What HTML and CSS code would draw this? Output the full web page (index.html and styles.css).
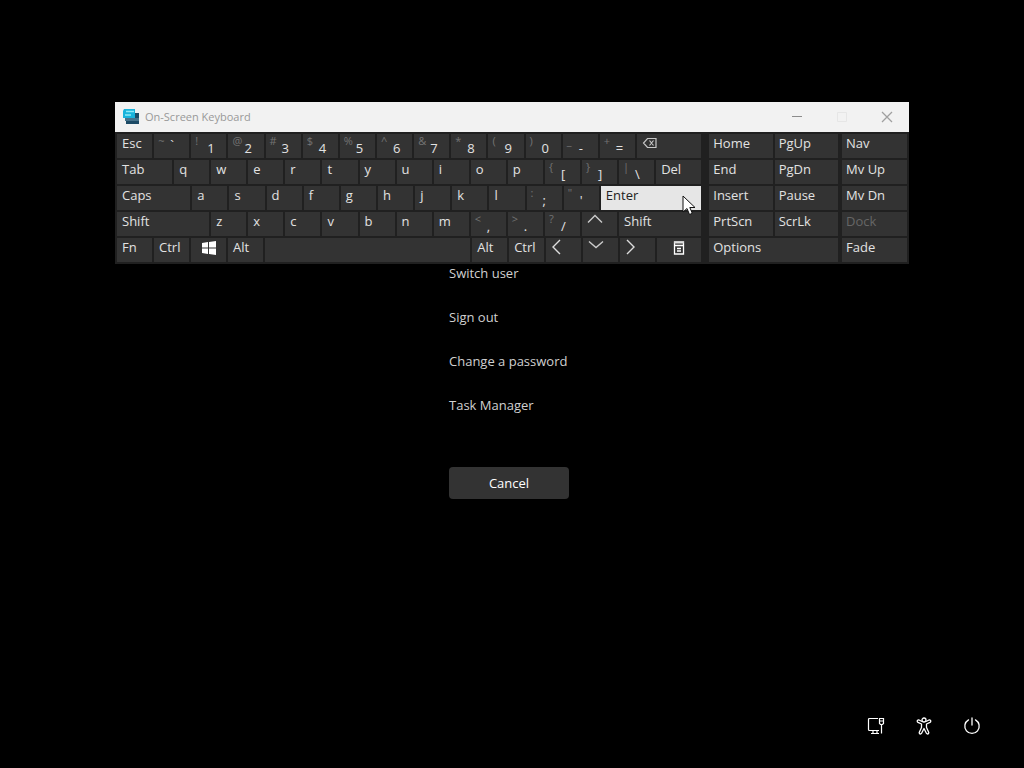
FILE: index.html
```html
<!DOCTYPE html>
<html lang="en">
<head>
<meta charset="utf-8">
<title>Security options</title>
<link rel="stylesheet" href="styles.css">
</head>
<body>
<section class="osk" aria-label="On-Screen Keyboard">
  <header class="titlebar">
    <svg class="app-icon" width="16" height="16" viewBox="0 0 16 16"><path d="M3 4h13v11H3z" fill="#1d4b66"/><path d="M2 9h14v3H2z" fill="#47738c"/><path d="M1 0h11v9H0V2z" fill="#19b3dc"/><path d="M3 2.500h8M2 6h6" stroke="#8deaf8" stroke-width="1.500"/></svg>
    <h1 class="title">On-Screen Keyboard</h1>
    <button class="win-btn" aria-label="Minimize"><svg width="12" height="12" viewBox="0 0 12 12"><path d="M1 5.500h10" stroke="#8c8c8c"/></svg></button>
    <button class="win-btn" aria-label="Maximize" disabled><svg width="12" height="12" viewBox="0 0 12 12"><path d="M1.500 1.500h9v9h-9z" fill="none" stroke="#e6e6e6"/></svg></button>
    <button class="win-btn" aria-label="Close"><svg width="12" height="12" viewBox="0 0 12 12"><path d="M1 1l10 10M11 1L1 11" stroke="#a0a0a0" stroke-width="1.300"/></svg></button>
  </header>
  <div class="board">
    <div class="keys">
      <div class="row">
        <button class="key">Esc</button>
        <button class="key dual"><span class="alt">~</span><span class="high">`</span></button>
        <button class="key dual"><span class="alt">!</span><span>1</span></button>
        <button class="key dual"><span class="alt">@</span><span>2</span></button>
        <button class="key dual"><span class="alt">#</span><span>3</span></button>
        <button class="key dual"><span class="alt">$</span><span>4</span></button>
        <button class="key dual"><span class="alt">%</span><span>5</span></button>
        <button class="key dual"><span class="alt">^</span><span>6</span></button>
        <button class="key dual"><span class="alt">&amp;</span><span>7</span></button>
        <button class="key dual"><span class="alt">*</span><span>8</span></button>
        <button class="key dual"><span class="alt">(</span><span>9</span></button>
        <button class="key dual"><span class="alt">)</span><span>0</span></button>
        <button class="key dual"><span class="alt">_</span><span>-</span></button>
        <button class="key dual"><span class="alt">+</span><span>=</span></button>
        <button class="key w-back" aria-label="Backspace"><svg width="16" height="18" viewBox="0 0 16 18"><path d="M5.500 4.500H14v9H5.500L1.500 9zM7.500 6.500l4 5M11.500 6.500l-4 5" fill="none" stroke="#c8c8c8" stroke-width="1.200"/></svg></button>
      </div>
      <div class="row">
        <button class="key w-tab">Tab</button>
        <button class="key">q</button><button class="key">w</button><button class="key">e</button><button class="key">r</button><button class="key">t</button><button class="key">y</button><button class="key">u</button><button class="key">i</button><button class="key">o</button><button class="key">p</button>
        <button class="key dual"><span class="alt">{</span><span>[</span></button>
        <button class="key dual"><span class="alt">}</span><span>]</span></button>
        <button class="key dual"><span class="alt">|</span><span>\</span></button>
        <button class="key w-del">Del</button>
      </div>
      <div class="row">
        <button class="key w-caps">Caps</button>
        <button class="key">a</button><button class="key">s</button><button class="key">d</button><button class="key">f</button><button class="key">g</button><button class="key">h</button><button class="key">j</button><button class="key">k</button><button class="key">l</button>
        <button class="key dual"><span class="alt">:</span><span>;</span></button>
        <button class="key dual"><span class="alt">"</span><span>'</span></button>
        <button class="key w-enter pressed">Enter
          <svg class="cursor" width="14" height="21" viewBox="0 0 14 21"><path d="M1 1v16l4-3.500 2.500 6 2.800-1.200-2.500-5.800H13z" fill="#fff" stroke="#111"/></svg>
        </button>
      </div>
      <div class="row">
        <button class="key w-shift">Shift</button>
        <button class="key">z</button><button class="key">x</button><button class="key">c</button><button class="key">v</button><button class="key">b</button><button class="key">n</button><button class="key">m</button>
        <button class="key dual"><span class="alt">&lt;</span><span>,</span></button>
        <button class="key dual"><span class="alt">&gt;</span><span>.</span></button>
        <button class="key dual"><span class="alt">?</span><span>/</span></button>
        <button class="key" aria-label="Up"><svg width="16" height="18" viewBox="0 0 16 18"><path d="M1 10.500l7-7 7 7" fill="none" stroke="#ccc" stroke-width="1.400"/></svg></button>
        <button class="key w-rshift">Shift</button>
      </div>
      <div class="row">
        <button class="key">Fn</button>
        <button class="key">Ctrl</button>
        <button class="key mid" aria-label="Windows"><svg width="14" height="14" viewBox="0 0 14 14"><path d="M0 2l6-1v5.500H0zM7 .9L14 0v6.500H7zM0 7.500h6V13l-6-1zM7 7.500h7V14l-7-1z" fill="#fff"/></svg></button>
        <button class="key">Alt</button>
        <button class="key w-space" aria-label="Space"></button>
        <button class="key">Alt</button>
        <button class="key">Ctrl</button>
        <button class="key" aria-label="Left"><svg width="12" height="18" viewBox="0 0 12 18"><path d="M9 2L2 9l7 7" fill="none" stroke="#ddd" stroke-width="1.400"/></svg></button>
        <button class="key" aria-label="Down"><svg width="16" height="18" viewBox="0 0 16 18"><path d="M1 3.500l7 6 7-6" fill="none" stroke="#ccc" stroke-width="1.400"/></svg></button>
        <button class="key" aria-label="Right"><svg width="12" height="18" viewBox="0 0 12 18"><path d="M2 2l7 7-7 7" fill="none" stroke="#ddd" stroke-width="1.400"/></svg></button>
        <button class="key w-menu mid" aria-label="Menu"><svg width="12" height="14" viewBox="0 0 12 14"><path d="M1.500 1h9v12h-9zM1 4.500h10M4 7.500h4M4 10h4" fill="none" stroke="#fff" stroke-width="1.300"/><path d="M1 1h10v1.500H1z" fill="#ddd"/></svg></button>
      </div>
    </div>
    <div class="nav-keys">
      <button class="key">Home</button><button class="key">PgUp</button>
      <button class="key">End</button><button class="key">PgDn</button>
      <button class="key">Insert</button><button class="key">Pause</button>
      <button class="key">PrtScn</button><button class="key">ScrLk</button>
      <button class="key wide">Options</button>
    </div>
    <div class="side-keys">
      <button class="key">Nav</button>
      <button class="key">Mv Up</button>
      <button class="key">Mv Dn</button>
      <button class="key" disabled>Dock</button>
      <button class="key">Fade</button>
    </div>
  </div>
</section>
<main class="options">
  <a class="option" href="#">Switch user</a>
  <a class="option" href="#">Sign out</a>
  <a class="option" href="#">Change a password</a>
  <a class="option" href="#">Task Manager</a>
  <button class="cancel">Cancel</button>
</main>
<footer class="tray">
  <button class="tray-btn" aria-label="Network"><svg width="18" height="18" viewBox="0 0 18 18" fill="none" stroke="#fff" stroke-width="1.200"><path d="M11 1.500H2.500q-1 0-1 1v10q0 1 1 1H12M6 13.500v3M10 13.500v3M4 16.500h8"/><path d="M12.500 1.500h4v5l-1 1h-2l-1-1zM12.500 4h4M14.500 7.500v9"/></svg></button>
  <button class="tray-btn" aria-label="Accessibility"><svg width="18" height="18" viewBox="0 0 18 18" fill="none" stroke="#fff" stroke-width="1.300" stroke-linejoin="round"><circle cx="9" cy="3" r="2"/><path d="M7 4.500L4 3Q2.500 2.700 2.200 4q0 1 .8 1.400L6.500 7v3.500L4.200 15.500q0 1.300 1 1.500 1 0 1.400-.8L9 11.500l2.400 4.700q.4.800 1.400.8 1-.2 1-1.500L11.500 10.500V7L15 5.400q.8-.4.800-1.400Q15.500 2.700 14 3l-3 1.500"/></svg></button>
  <button class="tray-btn" aria-label="Power"><svg width="18" height="18" viewBox="0 0 18 18" fill="none" stroke="#fff" stroke-width="1.300" stroke-linecap="round"><path d="M9 1v7M5.500 2.900a7.200 7.200 0 1 0 7 0"/></svg></button>
</footer>
</body>
</html>
```
FILE: styles.css
```css
* { box-sizing: border-box; }

body {
  margin: 0;
  min-height: 100vh;
  display: flex;
  flex-direction: column;
  background: #000;
  color: #d8d8d8;
  font: 13px/18px "Open Sans", "Noto Sans", sans-serif;
}

button {
  margin: 0;
  padding: 0;
  border: 0;
  background: none;
  color: inherit;
  font: inherit;
}

svg { display: block; flex: none; }

.osk {
  width: 90%;
  max-width: 794px;
  margin: 102px auto 0;
  background: #202020;
}

.titlebar {
  display: flex;
  align-items: center;
  height: 30px;
  padding-left: 8px;
  background: #f2f2f2;
}

.title {
  flex: 1;
  margin: 0 0 0 6px;
  color: #999;
  font-size: 11px;
  font-weight: 400;
}

.win-btn {
  display: grid;
  place-items: center;
  width: 45px;
  height: 28px;
}

.board {
  display: flex;
  padding: 2px;
}

.keys {
  flex: 585;
  display: grid;
  gap: 2px;
}

.nav-keys {
  flex: 129;
  display: grid;
  grid-template-columns: 1fr 1fr;
  gap: 2px;
  margin-left: 8px;
}

.side-keys {
  flex: 65;
  display: grid;
  gap: 2px;
  margin-left: 4px;
}

.row { display: flex; gap: 2px; }

.key {
  --w: 35;
  display: flex;
  align-items: flex-start;
  flex: var(--w) 1 calc(var(--w) * 1px);
  min-width: 0;
  height: 24px;
  padding-left: 4px;
  background: #333;
  color: #e2e2e2;
  text-align: left;
  white-space: nowrap;
}

.row .key { padding-left: 5px; }
.key:disabled { color: #666; }
.wide { grid-column: span 2; }

.row .mid {
  justify-content: center;
  padding: 3px 0 0;
}

.row .dual {
  display: grid;
  grid-template-columns: 12px 1fr;
  align-items: start;
  padding-left: 4px;
}

.dual span { padding-top: 5px; }
.dual .high { padding-top: 2px; }
.dual .alt {
  padding-top: 0;
  color: #737373;
  font-size: 11px;
  line-height: 14px;
}

.w-back { --w: 64; }
.w-tab { --w: 55; }
.w-del { --w: 45; }
.w-caps { --w: 73; }
.w-enter { --w: 100; }
.w-shift { --w: 92; }
.w-rshift { --w: 82; }
.w-space { --w: 205; }
.w-menu { --w: 44; }

.row .pressed {
  position: relative;
  background: #e6e6e6;
  color: #222;
}

.cursor {
  position: absolute;
  top: 9px;
  right: 5px;
}

.options {
  display: flex;
  flex-direction: column;
  gap: 26px;
  width: 126px;
  margin: 0 auto;
  padding-right: 6px;
}

.option {
  color: #d0d0d0;
  text-decoration: none;
  white-space: nowrap;
}

.cancel {
  height: 32px;
  margin-top: 27px;
  border-radius: 4px;
  background: #333;
  color: #fff;
}

.tray {
  display: flex;
  justify-content: flex-end;
  margin-top: auto;
  padding: 0 28px 18px;
}

.tray-btn {
  display: grid;
  place-items: center;
  width: 48px;
  height: 48px;
}
```
